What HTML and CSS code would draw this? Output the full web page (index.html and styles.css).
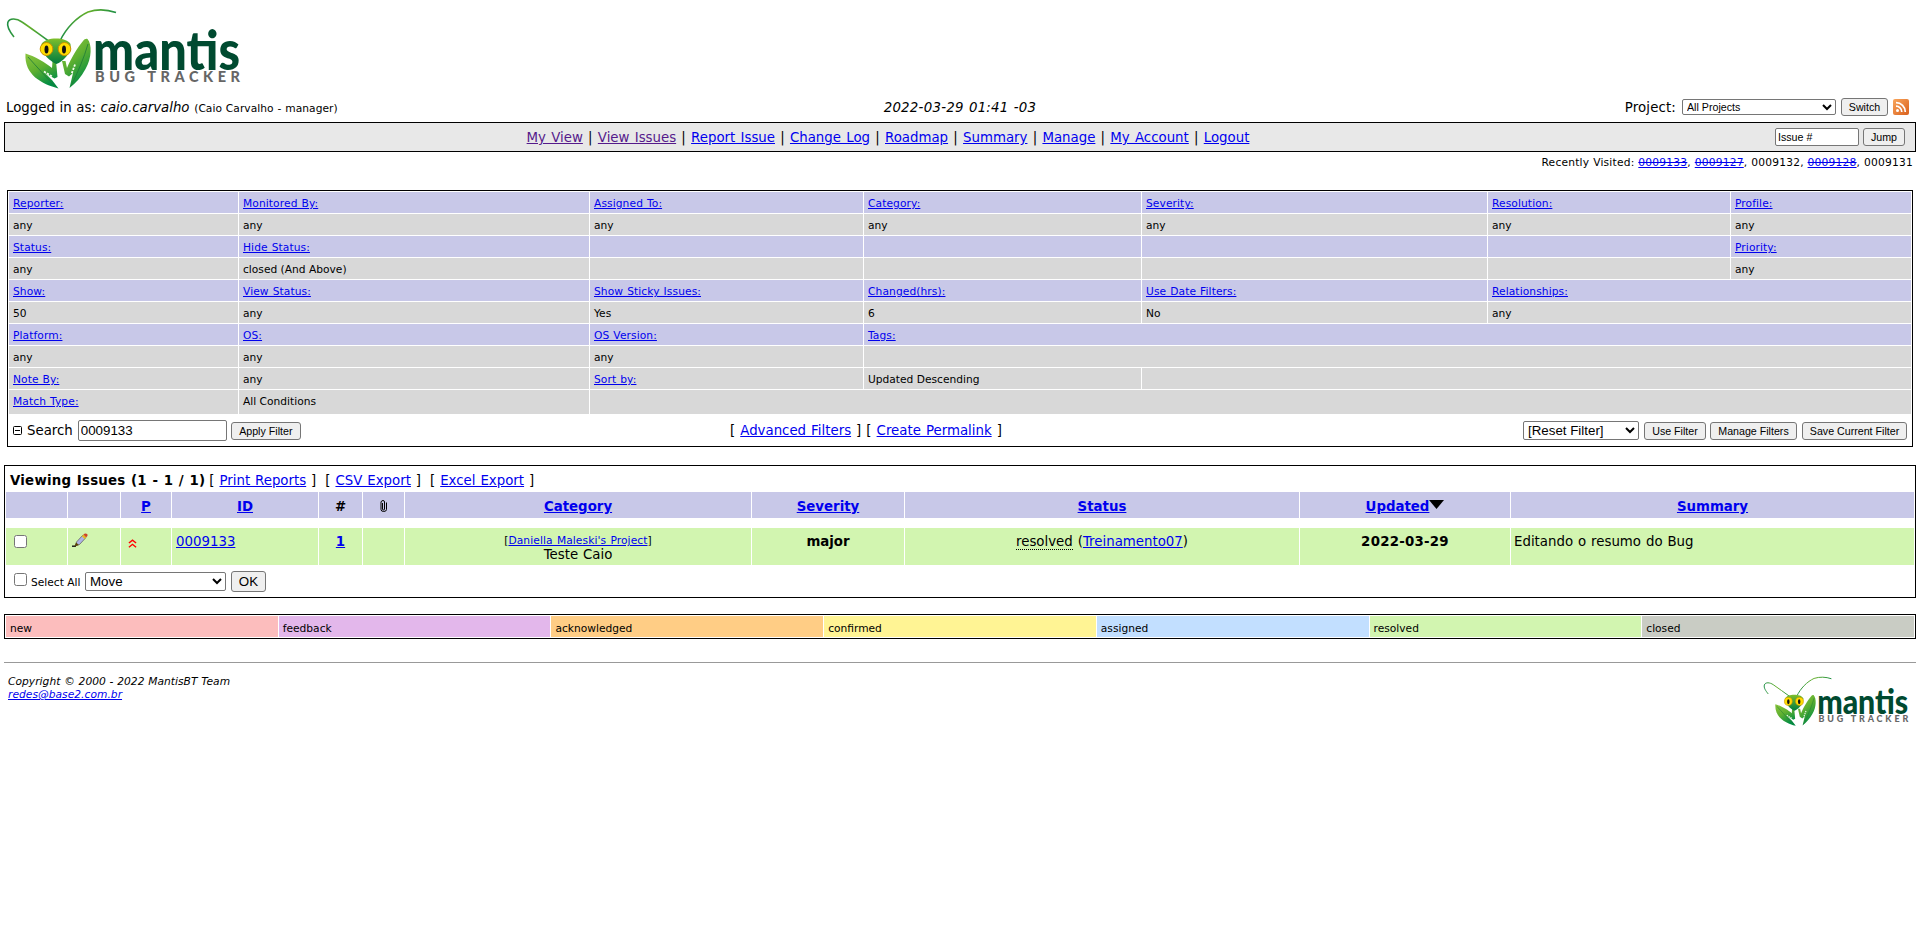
FILE: index.html
```html
<!DOCTYPE html>
<html lang="en">
<head>
<meta charset="utf-8">
<title>View Issues - MantisBT</title>
<link rel="stylesheet" href="styles.css">
</head>
<body>
<svg width="0" height="0" class="defs" aria-hidden="true">
  <defs>
    <linearGradient id="leaf" x1="0" y1="0" x2="0.5" y2="1"><stop offset="0" stop-color="#8cc63f"/><stop offset="0.5" stop-color="#5fb030"/><stop offset="1" stop-color="#008c44"/></linearGradient>
    <linearGradient id="head" x1="0" y1="0" x2="0" y2="1"><stop offset="0" stop-color="#7fbf2a"/><stop offset="0.5" stop-color="#3a9c38"/><stop offset="1" stop-color="#007a3d"/></linearGradient>
    <linearGradient id="feeler" x1="0" y1="0" x2="1" y2="0"><stop offset="0" stop-color="#1f8f45"/><stop offset="0.5" stop-color="#66b02a"/><stop offset="1" stop-color="#1f8f45"/></linearGradient>
    <symbol id="mantis-logo" viewBox="0 0 242 92">
      <path d="M14 37C10 32 6.500 27 7.800 22.500C9.500 17.500 17 18.500 22 22C31 28 40 35 50 42" fill="none" stroke="url(#feeler)" stroke-width="1.600"/>
      <path d="M60 41C66 28 77 17 88 12C97 9 107 9.500 116 12.500" fill="none" stroke="url(#feeler)" stroke-width="1.600"/>
      <path d="M25.500 53.500C34 56 46 63 52 68L52.500 61H56L57.500 77L54.500 78.500L45 73L52 80L58.500 88.500C42 84 24 75 25.500 53.500Z" fill="url(#leaf)"/>
      <path d="M87.500 39C92 44 92 58 85.500 69C81 77 76 83 69.500 88L73 73L69 76.500L65 74L62 61H65.500L67 68C71 58 78 47 83 41C84.500 39 86 38.500 87.500 39Z" fill="url(#leaf)"/>
      <path d="M28 57C36 66 46 77 56 87M88 44C84 58 78 72 71 86" fill="none" stroke="#1e7a38" stroke-width=".8"/>
      <path d="M44 71.500L53 77M75 64.500L71.500 74" fill="none" stroke="#f6fbee" stroke-width="1.800" stroke-dasharray="2.200 1.300"/>
      <path d="M41.500 44C45 36.500 67 36.500 70.500 44C72 53 62 62 56.500 64C51 62 40 53 41.500 44Z" fill="url(#head)"/>
      <ellipse cx="46.500" cy="49" rx="6.300" ry="6.500" fill="#ffdd00" stroke="#c99200"/>
      <ellipse cx="64.500" cy="49" rx="6.300" ry="6.500" fill="#ffdd00" stroke="#c99200"/>
      <ellipse cx="46.500" cy="49.500" rx="2" ry="4" fill="#111"/>
      <ellipse cx="64" cy="49.500" rx="2" ry="4" fill="#111"/>
      <text class="logo-name" x="93" y="70" textLength="147" lengthAdjust="spacingAndGlyphs">mantis</text>
      <text class="logo-tag" x="95" y="82" textLength="145">BUG TRACKER</text>
    </symbol>
  </defs>
</svg>

<header class="banner"><svg class="logo" viewBox="0 0 242 92"><use href="#mantis-logo"/></svg></header>

<div class="login-bar">
  <div class="login-user">Logged in as: <i>caio.carvalho</i> <span class="small">(Caio Carvalho - manager)</span></div>
  <div class="login-time"><i>2022-03-29 01:41 -03</i></div>
  <div class="login-project">
    <span>Project:</span>
    <select class="select-small select-project"><option>All Projects</option></select>
    <button class="btn btn-switch">Switch</button>
    <svg class="rss" viewBox="0 0 16 16"><defs><linearGradient id="rssbg" x1="0" y1="0" x2="1" y2="1"><stop offset="0" stop-color="#f9a65c"/><stop offset="1" stop-color="#d9601d"/></linearGradient></defs><rect width="16" height="16" rx="2" fill="url(#rssbg)"/><circle cx="4.500" cy="11.500" r="1.500" fill="#fff"/><path d="M3 7.200A5.800 5.800 0 0 1 8.800 13M3 3.700A9.300 9.300 0 0 1 12.300 13" fill="none" stroke="#fff" stroke-width="1.700"/></svg>
  </div>
</div>

<nav class="menu">
  <div class="menu-links"><a class="visited" href="#">My View</a> | <a class="visited" href="#">View Issues</a> | <a href="#">Report Issue</a> | <a href="#">Change Log</a> | <a href="#">Roadmap</a> | <a href="#">Summary</a> | <a href="#">Manage</a> | <a href="#">My Account</a> | <a href="#">Logout</a></div>
  <div class="menu-jump"><input class="input-issue" type="text" value="Issue #"><button class="btn btn-jump">Jump</button></div>
</nav>

<div class="recent">Recently Visited: <a class="done" href="#">0009133</a>, <a class="done" href="#">0009127</a>, 0009132, <a class="done" href="#">0009128</a>, 0009131</div>

<section class="filter">
  <table class="filter-table">
    <colgroup><col class="f1"><col class="f2"><col class="f3"><col class="f4"><col class="f5"><col class="f6"><col class="f7"></colgroup>
    <tr class="head"><td><a href="#">Reporter:</a></td><td><a href="#">Monitored By:</a></td><td><a href="#">Assigned To:</a></td><td><a href="#">Category:</a></td><td><a href="#">Severity:</a></td><td><a href="#">Resolution:</a></td><td><a href="#">Profile:</a></td></tr>
    <tr><td>any</td><td>any</td><td>any</td><td>any</td><td>any</td><td>any</td><td>any</td></tr>
    <tr class="head"><td><a href="#">Status:</a></td><td><a href="#">Hide Status:</a></td><td></td><td></td><td></td><td></td><td><a href="#">Priority:</a></td></tr>
    <tr><td>any</td><td>closed (And Above)</td><td></td><td></td><td></td><td></td><td>any</td></tr>
    <tr class="head"><td><a href="#">Show:</a></td><td><a href="#">View Status:</a></td><td><a href="#">Show Sticky Issues:</a></td><td><a href="#">Changed(hrs):</a></td><td><a href="#">Use Date Filters:</a></td><td colspan="2"><a href="#">Relationships:</a></td></tr>
    <tr><td>50</td><td>any</td><td>Yes</td><td>6</td><td>No</td><td colspan="2">any</td></tr>
    <tr class="head"><td><a href="#">Platform:</a></td><td><a href="#">OS:</a></td><td><a href="#">OS Version:</a></td><td colspan="4"><a href="#">Tags:</a></td></tr>
    <tr><td>any</td><td>any</td><td>any</td><td colspan="4"></td></tr>
    <tr><td><a href="#">Note By:</a></td><td>any</td><td><a href="#">Sort by:</a></td><td>Updated Descending</td><td colspan="3"></td></tr>
    <tr class="last"><td><a href="#">Match Type:</a></td><td>All Conditions</td><td colspan="5"></td></tr>
  </table>
  <div class="filter-bar">
    <div class="search">
      <svg class="collapse" viewBox="0 0 9 9"><rect x=".5" y=".5" width="8" height="8" rx="1" fill="#fff" stroke="#000"/><path d="M2 4.500H7" stroke="#000"/></svg>
      <span>Search</span><input class="input-search" type="text" value="0009133"><button class="btn btn-apply">Apply Filter</button>
    </div>
    <div class="filter-links">[ <a href="#">Advanced Filters</a> ] [ <a href="#">Create Permalink</a> ]</div>
    <div class="filter-actions">
      <select class="select-reset"><option>[Reset Filter]</option></select><button class="btn btn-use">Use Filter</button><button class="btn btn-manage">Manage Filters</button><button class="btn btn-save">Save Current Filter</button>
    </div>
  </div>
</section>

<section class="issues">
  <div class="issues-title"><b>Viewing Issues (1 - 1 / 1)</b><span>[ <a href="#">Print Reports</a> ]</span><span>[ <a href="#">CSV Export</a> ]</span><span>[ <a href="#">Excel Export</a> ]</span></div>
  <table class="issue-table">
    <colgroup><col class="b1"><col class="b2"><col class="b3"><col class="b4"><col class="b5"><col class="b6"><col class="b7"><col class="b8"><col class="b9"><col class="b10"><col class="b11"></colgroup>
    <tr class="head"><td></td><td></td><td><a href="#">P</a></td><td><a href="#">ID</a></td><td>#</td><td><svg class="clip" viewBox="0 0 8 12"><path d="M2.500 3V9Q2.500 10 3.500 10T4.500 9V2Q4.500 .5 3 .5T1 2V9.500Q1 11.500 3.700 11.500T6.500 9.500V2.500" fill="none" stroke="#000"/></svg></td><td><a href="#">Category</a></td><td><a href="#">Severity</a></td><td><a href="#">Status</a></td><td><a href="#">Updated</a><svg class="sort" viewBox="0 0 15 9"><path d="M0 0H15L7.500 9Z"/></svg></td><td><a href="#">Summary</a></td></tr>
    <tr class="gap"><td colspan="11"></td></tr>
    <tr class="issue"><td class="left"><input class="check" type="checkbox"></td>
      <td class="left"><svg class="pencil" viewBox="0 0 16 14"><path d="M0 13.200H4" stroke="#111" stroke-width="1.400"/><path d="M3 13L4.500 9L11 2L14 4.500L7.500 11.500Z" fill="#aeb3e6" stroke="#555" stroke-width=".7"/><path d="M2.500 13.500L4.200 9.500L6.800 12Z" fill="#5b4300"/><path d="M9.800 3.300L11.200 1.800L14.200 4.300L12.800 6Z" fill="#e9b81d"/><path d="M11.300 1.600Q13.500-.7 15.500 1.400Q16 3 14.200 4.300Z" fill="#cf4528"/></svg></td>
      <td class="left"><svg class="prio" viewBox="0 0 10 10"><path d="M1 4.500L5 1.200L9 4.500M1 9.200L5 5.900L9 9.200" fill="none" stroke="red" stroke-width="1.600"/></svg></td>
      <td class="left issue-id"><a href="#">0009133</a></td><td><b><a href="#">1</a></b></td><td></td>
      <td class="category"><span class="small">[<a href="#">Daniella Maleski's Project</a>]</span><br>Teste Caio</td>
      <td><b>major</b></td><td><span class="dotted">resolved</span> (<a href="#">Treinamento07</a>)</td><td class="date"><b>2022-03-29</b></td><td class="left">Editando o resumo do Bug</td></tr>
  </table>
  <div class="bulk"><input class="check" type="checkbox"><span class="small">Select All</span><select class="select-move"><option>Move</option></select><button class="btn-ok">OK</button></div>
</section>

<div class="legend"><div class="new">new</div><div class="feedback">feedback</div><div class="acknowledged">acknowledged</div><div class="confirmed">confirmed</div><div class="assigned">assigned</div><div class="resolved">resolved</div><div class="closed">closed</div></div>

<footer class="footer">
  <address>Copyright © 2000 - 2022 MantisBT Team<br><a href="#">redes@base2.com.br</a></address>
  <svg class="logo-small" viewBox="0 0 242 92"><use href="#mantis-logo"/></svg>
</footer>
</body>
</html>
```
FILE: styles.css
```css
* { box-sizing: border-box; }
body { margin: 0; padding: 0 4px; background: #fff; color: #000; font: 13.33px/16px Verdana, "DejaVu Sans", sans-serif; word-spacing: .7px; }
a { color: #00e; }
a.visited { color: #551a8b; }
.small { font-size: 10.67px; letter-spacing: .1px; }
.defs { position: absolute; }
.banner { height: 96px; }
.logo { display: block; width: 242px; height: 92px; margin-left: -4px; }
.logo-name { font: 900 55px Lato, sans-serif; fill: #004a30; word-spacing: 0; }
.logo-tag { font: 900 14.5px Lato, sans-serif; fill: #666; word-spacing: 0; }

input, select, button { margin: 0; font-family: Arial, "Liberation Sans", sans-serif; word-spacing: 0; }
input[type="text"], select { border: 1px solid #767676; border-radius: 2px; background-color: #fff; color: #000; }
.btn { height: 18px; padding: 0; border: 1px solid #767676; border-radius: 3px; background: #efefef; color: #000; font-size: 10.67px; line-height: 14px; white-space: nowrap; }
.check { width: 13px; height: 13px; }

.login-bar { display: grid; grid-template-columns: 1fr auto 1fr; align-items: center; height: 22px; padding: 0 2px; }
.login-user, .login-time, .login-project span { padding-top: 2px; }
.login-user { word-spacing: .4px; }
.login-user .small { letter-spacing: .05px; }
.login-time { letter-spacing: .26px; }
.login-project { display: flex; justify-content: flex-end; align-items: center; padding-right: 5px; }
.login-project span { letter-spacing: .15px; }
.select-small { height: 16px; font-size: 10.67px; padding: 0; }
.select-project { width: 154px; margin: 0 5px 0 6px; }
.btn-switch { width: 47px; margin-right: 5px; }
.rss { width: 16px; height: 16px; }

.menu { display: flex; align-items: center; height: 30px; margin-top: 4px; border: 1px solid #000; background: #e8e8e8; }
.menu-links { width: 1766px; padding-top: 2px; text-align: center; word-spacing: 1px; }
.menu-jump { display: flex; gap: 4px; margin-left: 4px; }
.input-issue { width: 84px; height: 18px; padding: 0 2px; font-size: 10.67px; }
.btn-jump { width: 42px; }
.recent { height: 38px; padding: 3px 3px 0; font-size: 10.67px; letter-spacing: .22px; word-spacing: .2px; text-align: right; }
.done { text-decoration: underline line-through; }

.filter { height: 257px; margin: 0 3px; border: 1px solid #000; }
.filter-table { width: 1904px; table-layout: fixed; border-spacing: 1px; font-size: 10.67px; line-height: 13px; word-spacing: 0; }
.filter-table a { letter-spacing: .1px; word-spacing: .5px; }
.filter-table td { height: 21px; padding: 5px 4px 3px; background: #d8d8d8; }
.filter-table .head td, .issue-table .head td { background: #c8c8e8; }
.filter-table .last td { height: 24px; padding-bottom: 6px; }
.f1 { width: 229px; } .f2 { width: 350px; } .f3 { width: 273px; } .f4 { width: 277px; } .f5 { width: 345px; } .f6 { width: 242px; }
.filter-bar { display: grid; grid-template-columns: 717px 1fr auto; align-items: center; height: 31px; padding: 0 5px; }
.search, .filter-actions { display: flex; align-items: center; }
.collapse { width: 9px; height: 9px; margin-right: 5px; }
.input-search { width: 149px; height: 21px; margin: 0 4px 0 5px; padding: 0 2px; font-size: 13.33px; }
.btn-apply { width: 70px; }
.filter-links { padding-top: 1px; word-spacing: .8px; }
.filter-actions { gap: 5px; }
.select-reset { width: 116px; height: 19px; padding: 0; font-size: 13.33px; }
.btn-use { width: 62px; margin-right: -1px; } .btn-manage { width: 87px; } .btn-save { width: 105px; }

.issues { height: 133px; margin-top: 18px; border: 1px solid #000; }
.issues-title { display: flex; align-items: center; height: 26px; padding: 3px 5px 0; }
.issues-title b { margin-right: 4px; letter-spacing: .23px; }
.issues-title span { margin-right: 9px; }
.issue-table { width: 1910px; table-layout: fixed; border-spacing: 1px 0; }
.issue-table td { padding: 6px 3px 2px; text-align: center; vertical-align: top; }
.issue-table .head td { height: 26px; padding: 7px 3px 1px; font-weight: bold; }
.issue-table .gap td { height: 10px; padding: 0; }
.issue-table .issue td { height: 37px; background: #d2f5b0; }
.issue-table .issue td.left { text-align: left; }
.issue-table .issue td.issue-id { padding-left: 4px; }
.issue-table .issue td.category { padding-top: 5px; line-height: 14px; }
.issue-table .date { letter-spacing: .25px; }
.issue .check { margin: 1px 0 0 5px; }
.b1 { width: 61px; } .b2 { width: 52px; } .b3 { width: 50px; } .b4 { width: 146px; } .b5 { width: 43px; } .b6 { width: 41px; } .b7 { width: 346px; } .b8 { width: 152px; } .b9 { width: 394px; } .b10 { width: 210px; }
.clip { width: 8px; height: 12px; vertical-align: -1px; }
.sort { width: 15px; height: 9px; vertical-align: 2px; }
.pencil { width: 16px; height: 14px; margin: -1px 0 0 1px; }
.prio { display: block; width: 9px; height: 9px; margin: 5px 0 0 4px; }
.dotted { border-bottom: 1px dotted #000; }
.bulk { display: flex; align-items: center; height: 33px; padding-left: 9px; }
.bulk .check { margin: -4px 4px 0 0; }
.bulk .small { width: 50px; padding-top: 2px; letter-spacing: 0; word-spacing: 0; white-space: nowrap; }
.select-move { width: 141px; height: 19px; margin: 0 5px 0 4px; padding: 0; font-size: 13.33px; }
.btn-ok { width: 35px; height: 21px; padding: 0; border: 1px solid #767676; border-radius: 3px; background: #efefef; font-size: 13.33px; }

.legend { display: grid; grid-template-columns: repeat(7, 1fr); gap: 1px; height: 25px; margin-top: 16px; padding: 1px; border: 1px solid #000; font-size: 10.67px; line-height: 13px; }
.legend div { padding: 6px 4px 2px; }
.new { background: #fcbdbd; } .feedback { background: #e3b7eb; } .acknowledged { background: #ffcd85; } .confirmed { background: #fff494; } .assigned { background: #c2dfff; } .resolved { background: #d2f5b0; } .closed { background: #c9ccc4; }

.footer { display: flex; justify-content: space-between; margin-top: 23px; padding: 12px 4px 0; border-top: 1px solid #999; }
.footer address { font-size: 10.67px; line-height: 13px; letter-spacing: .04px; word-spacing: .3px; }
.logo-small { width: 151px; height: 57px; margin-top: -4px; margin-right: 2px; }
```
